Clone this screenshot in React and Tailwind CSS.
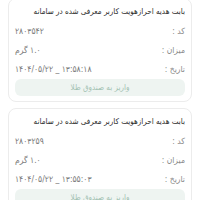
import React from "react";

const items = [
  {
    code: "۲۸۰۳۵۴۲",
    amount: "۱.۰ گرم",
    date: "۱۴۰۴/۰۵/۲۲ _ ۱۳:۵۸:۱۸",
  },
  {
    code: "۲۸۰۳۲۵۹",
    amount: "۱.۰ گرم",
    date: "۱۴۰۴/۰۵/۲۲ _ ۱۳:۵۵:۰۳",
  },
];

const Row = ({ label, value, ltr }) => (
  <div className="flex h-[19px] items-center justify-between">
    <span className="text-[8.5px] text-[#8a8a8a]">{label}</span>
    <span dir={ltr ? "ltr" : "rtl"} className="text-[8.5px] text-[#7a7a7a]">
      {value}
    </span>
  </div>
);

const App = () => {
  return (
    <div
      className="min-h-screen bg-white px-[8px] overflow-hidden"
      dir="rtl"
      style={{ fontFamily: '"DejaVu Sans Condensed", "DejaVu Sans", sans-serif' }}
    >
      <div className="-mt-[2px] flex flex-col gap-[6px]">
        {items.map((item, i) => (
          <div
            key={i}
            className="rounded-[8px] border border-[#ececec] bg-white px-[6px] pt-[3px] pb-[5px]"
          >
            <div className="flex h-[20px] items-center whitespace-nowrap text-[8px] text-[#2b2b2b]">
              بابت هدیه احرازهویت کاربر معرفی شده در سامانه
            </div>
            <Row label="کد :" value={item.code} ltr />
            <Row label="میزان :" value={item.amount} />
            <Row label="تاریخ :" value={item.date} ltr />
            <button className="flex h-[17px] w-full items-center justify-center rounded-[6px] bg-[#eef4f1] text-[8px] text-[#a3c2b3]">
              واریز به صندوق طلا
            </button>
          </div>
        ))}
      </div>
    </div>
  );
};

export default App;
